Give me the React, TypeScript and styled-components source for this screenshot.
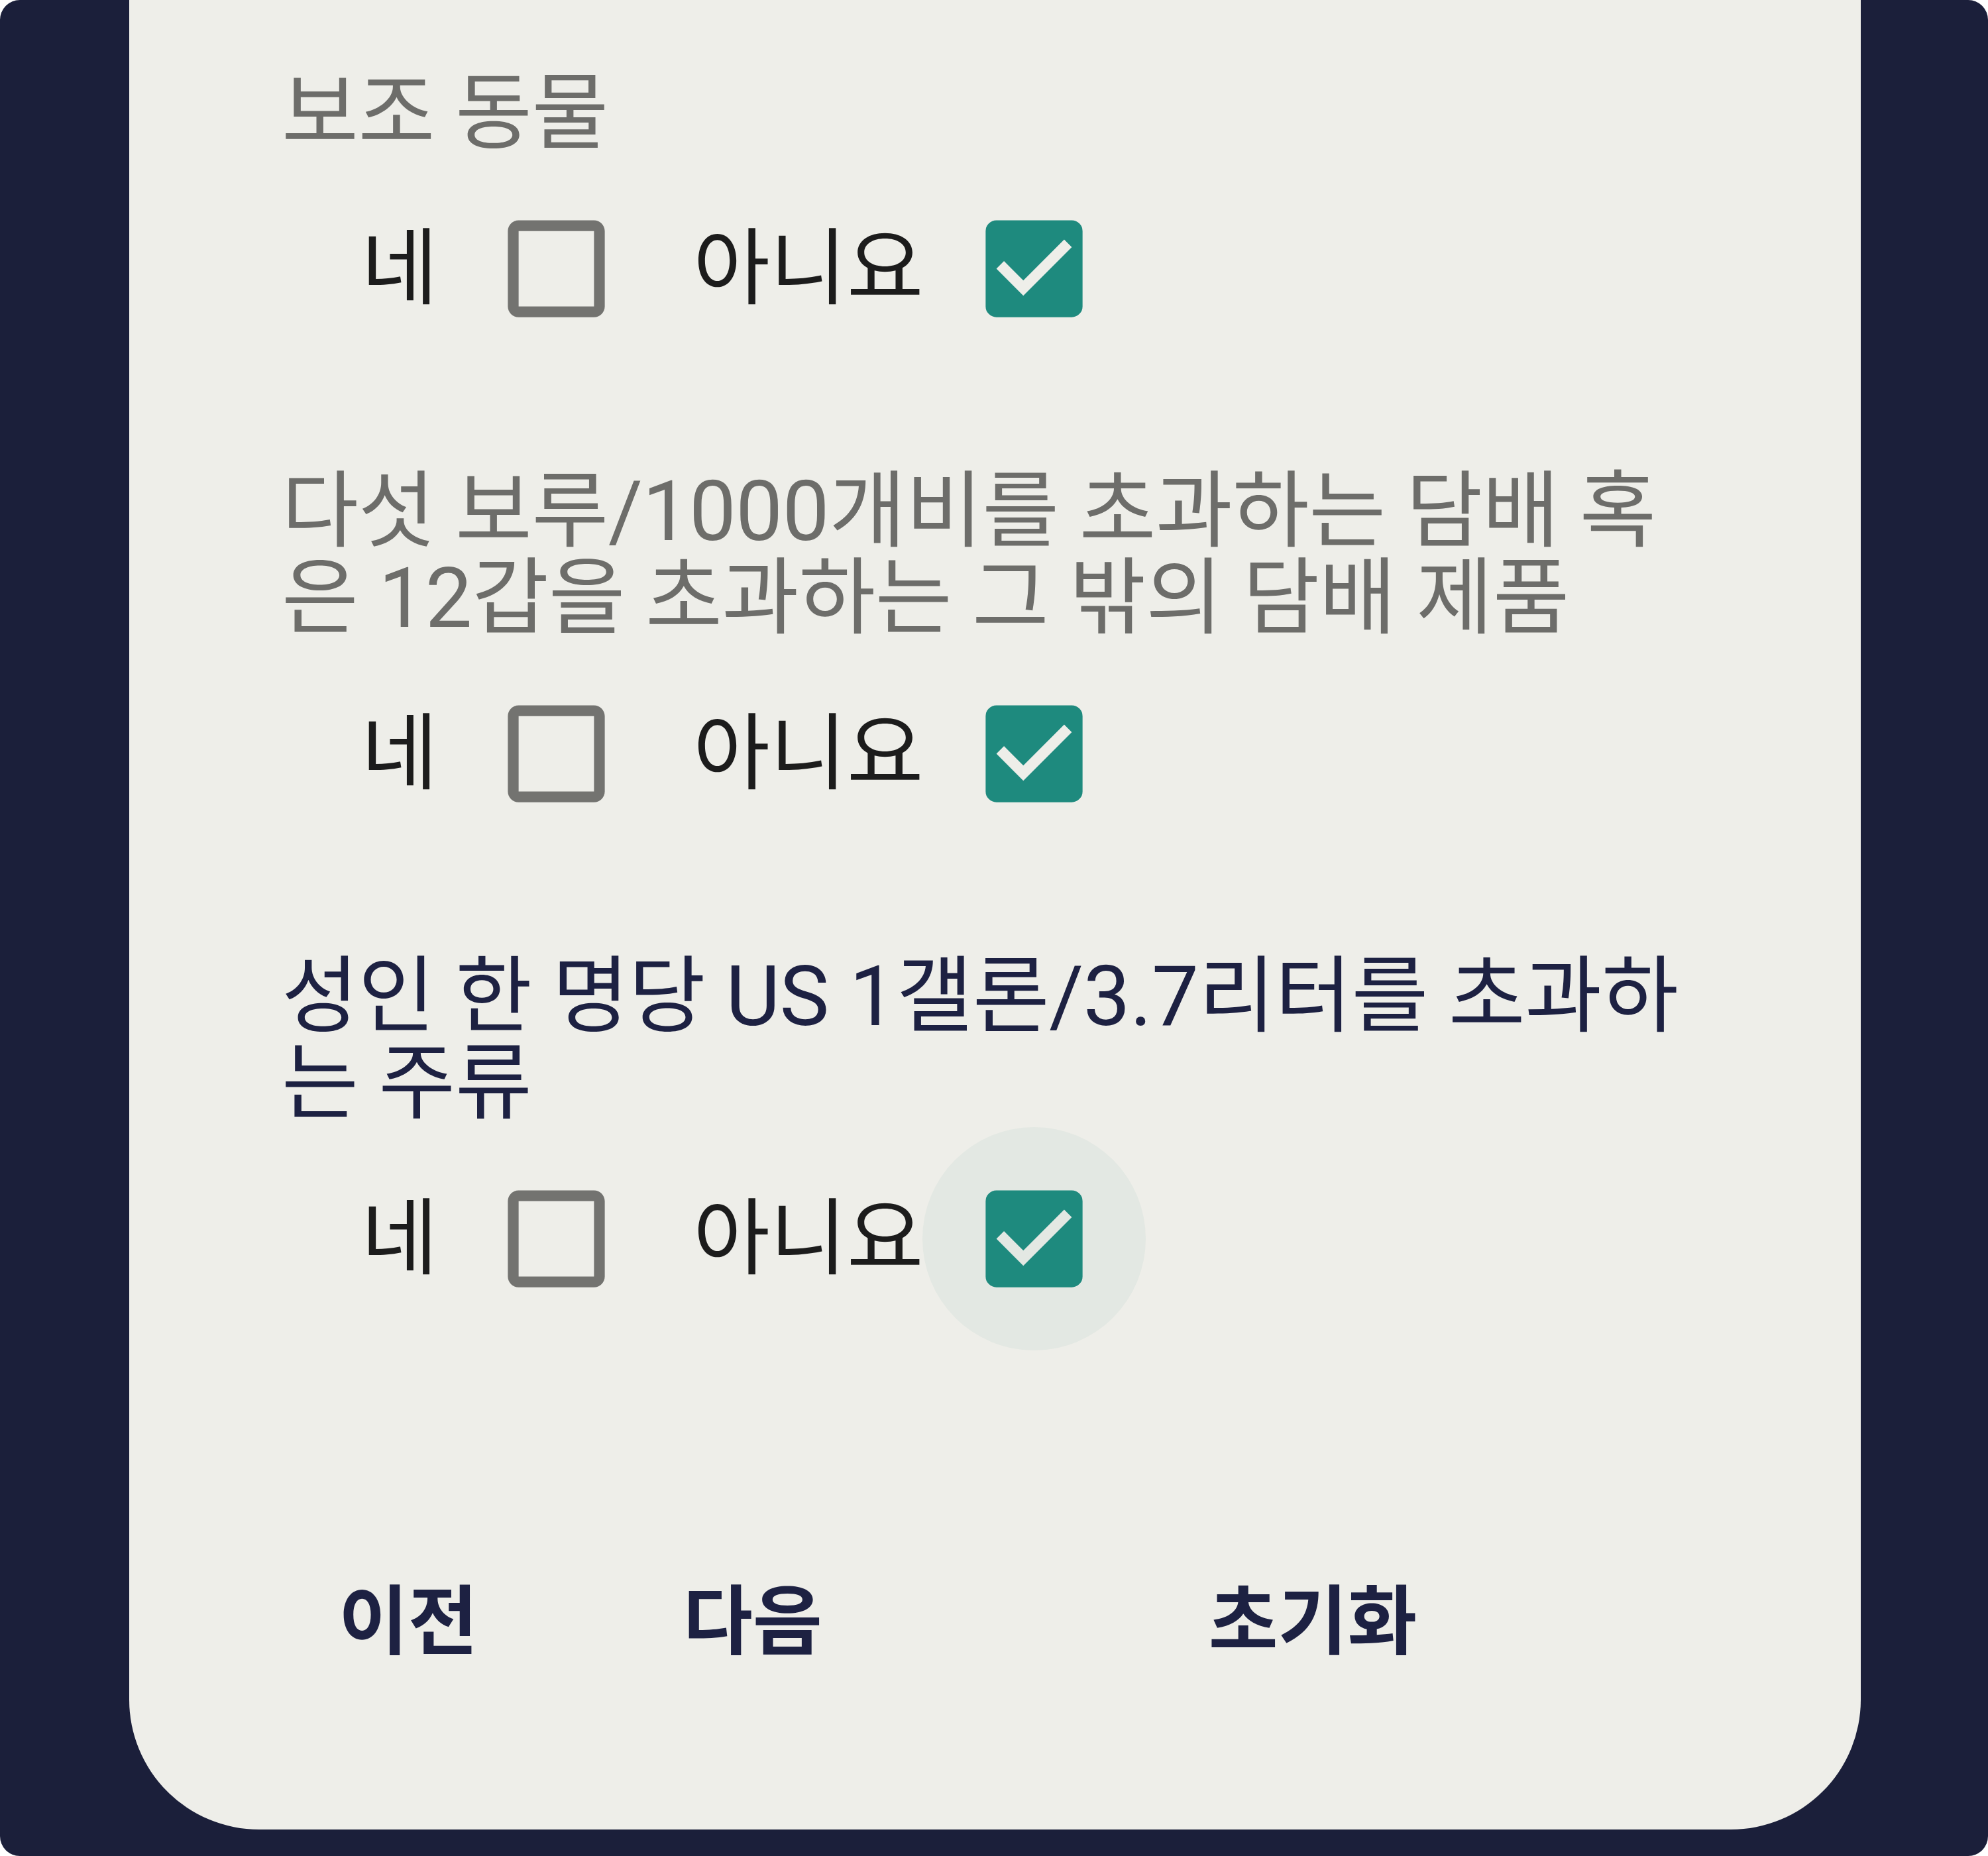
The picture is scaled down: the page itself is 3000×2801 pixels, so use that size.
import * as React from 'react';
import styled, { createGlobalStyle } from 'styled-components';
import { MdCheckBox, MdCheckBoxOutlineBlank } from 'react-icons/md';

const GlobalStyle = createGlobalStyle`
  html, body {
    margin: 0;
    padding: 0;
    background: #ffffff;
  }
`;

const Frame = styled.div`
  width: 3000px;
  height: 2801px;
  box-sizing: border-box;
  background: #1b1f3a;
  border-radius: 30px;
  overflow: hidden;
  display: flex;
  padding: 0 192px 40px 195px;
  font-family: Roboto, "Noto Sans CJK KR", sans-serif;
`;

const Sheet = styled.div`
  flex: 1;
  background: #eeeee9;
  border-radius: 0 0 196px 196px;
  padding: 106px 0 0 230px;
  display: flex;
  flex-direction: column;
`;

const Question = styled.p<{ $active?: boolean }>`
  margin: 0;
  font-size: 126px;
  line-height: 131px;
  letter-spacing: -0.4px;
  white-space: nowrap;
  color: ${p => (p.$active ? '#1d2142' : '#6d6d6a')};
`;

const OptionRow = styled.div<{ $last?: boolean }>`
  display: flex;
  align-items: center;
  height: 337px;
  padding-left: 120px;
  margin-bottom: ${p => (p.$last ? '0' : '133px')};
`;

const Label = styled.span<{ $gap?: number }>`
  font-size: 126px;
  line-height: 128px;
  color: #1c1c1c;
  margin-left: ${p => p.$gap ?? 0}px;
`;

const CheckArea = styled.div<{ $focused?: boolean, $gap: number }>`
  width: 337px;
  height: 337px;
  margin-left: ${p => p.$gap}px;
  border-radius: 50%;
  display: flex;
  align-items: center;
  justify-content: center;
  background: ${p => (p.$focused ? 'rgba(30, 138, 126, 0.05)' : 'transparent')};
`;

const ButtonBar = styled.div`
  display: flex;
  align-items: center;
  margin-top: 317px;
  height: 160px;
  margin-left: -9px;
`;

const TextButton = styled.button<{ $gap?: number }>`
  width: 400px;
  height: 160px;
  border: 0;
  background: transparent;
  font-family: Roboto, "Noto Sans CJK KR", sans-serif;
  font-size: 114px;
  font-weight: 700;
  color: #1d2142;
  padding: 0;
  margin-left: ${p => p.$gap ?? 0}px;
`;

interface IChoiceProps {
  checked: boolean,
  focused?: boolean,
  gap: number,
}

const Choice = ({ checked, focused, gap }: IChoiceProps) => (
  <CheckArea $focused={focused} $gap={gap}>
    {checked
      ? <MdCheckBox size={195} color="#1e8a7e" />
      : <MdCheckBoxOutlineBlank size={195} color="#737370" />}
  </CheckArea>
);

interface IQuestion {
  text: React.ReactNode,
  answer: boolean,
  active?: boolean,
}

const questions: IQuestion[] = [
  { text: '보조 동물', answer: false },
  { text: <>다섯 보루/1000개비를 초과하는 담배 혹<br />은 12갑을 초과하는 그 밖의 담배 제품</>, answer: false },
  { text: <>성인 한 명당 US 1갤론/3.7리터를 초과하<br />는 주류</>, answer: false, active: true },
];

export default function App() {
  return <>
    <GlobalStyle />
    <Frame>
      <Sheet>
        {questions.map((q, i) => <React.Fragment key={i}>
          <Question $active={q.active}>{q.text}</Question>
          <OptionRow $last={i === questions.length - 1}>
            <Label>네</Label>
            <Choice checked={q.answer} gap={10} />
            <Label $gap={38}>아니요</Label>
            <Choice checked={!q.answer} focused={q.active} gap={-2} />
          </OptionRow>
        </React.Fragment>)}
        <ButtonBar>
          <TextButton>이전</TextButton>
          <TextButton $gap={120}>다음</TextButton>
          <TextButton $gap={445}>초기화</TextButton>
        </ButtonBar>
      </Sheet>
    </Frame>
  </>;
}
